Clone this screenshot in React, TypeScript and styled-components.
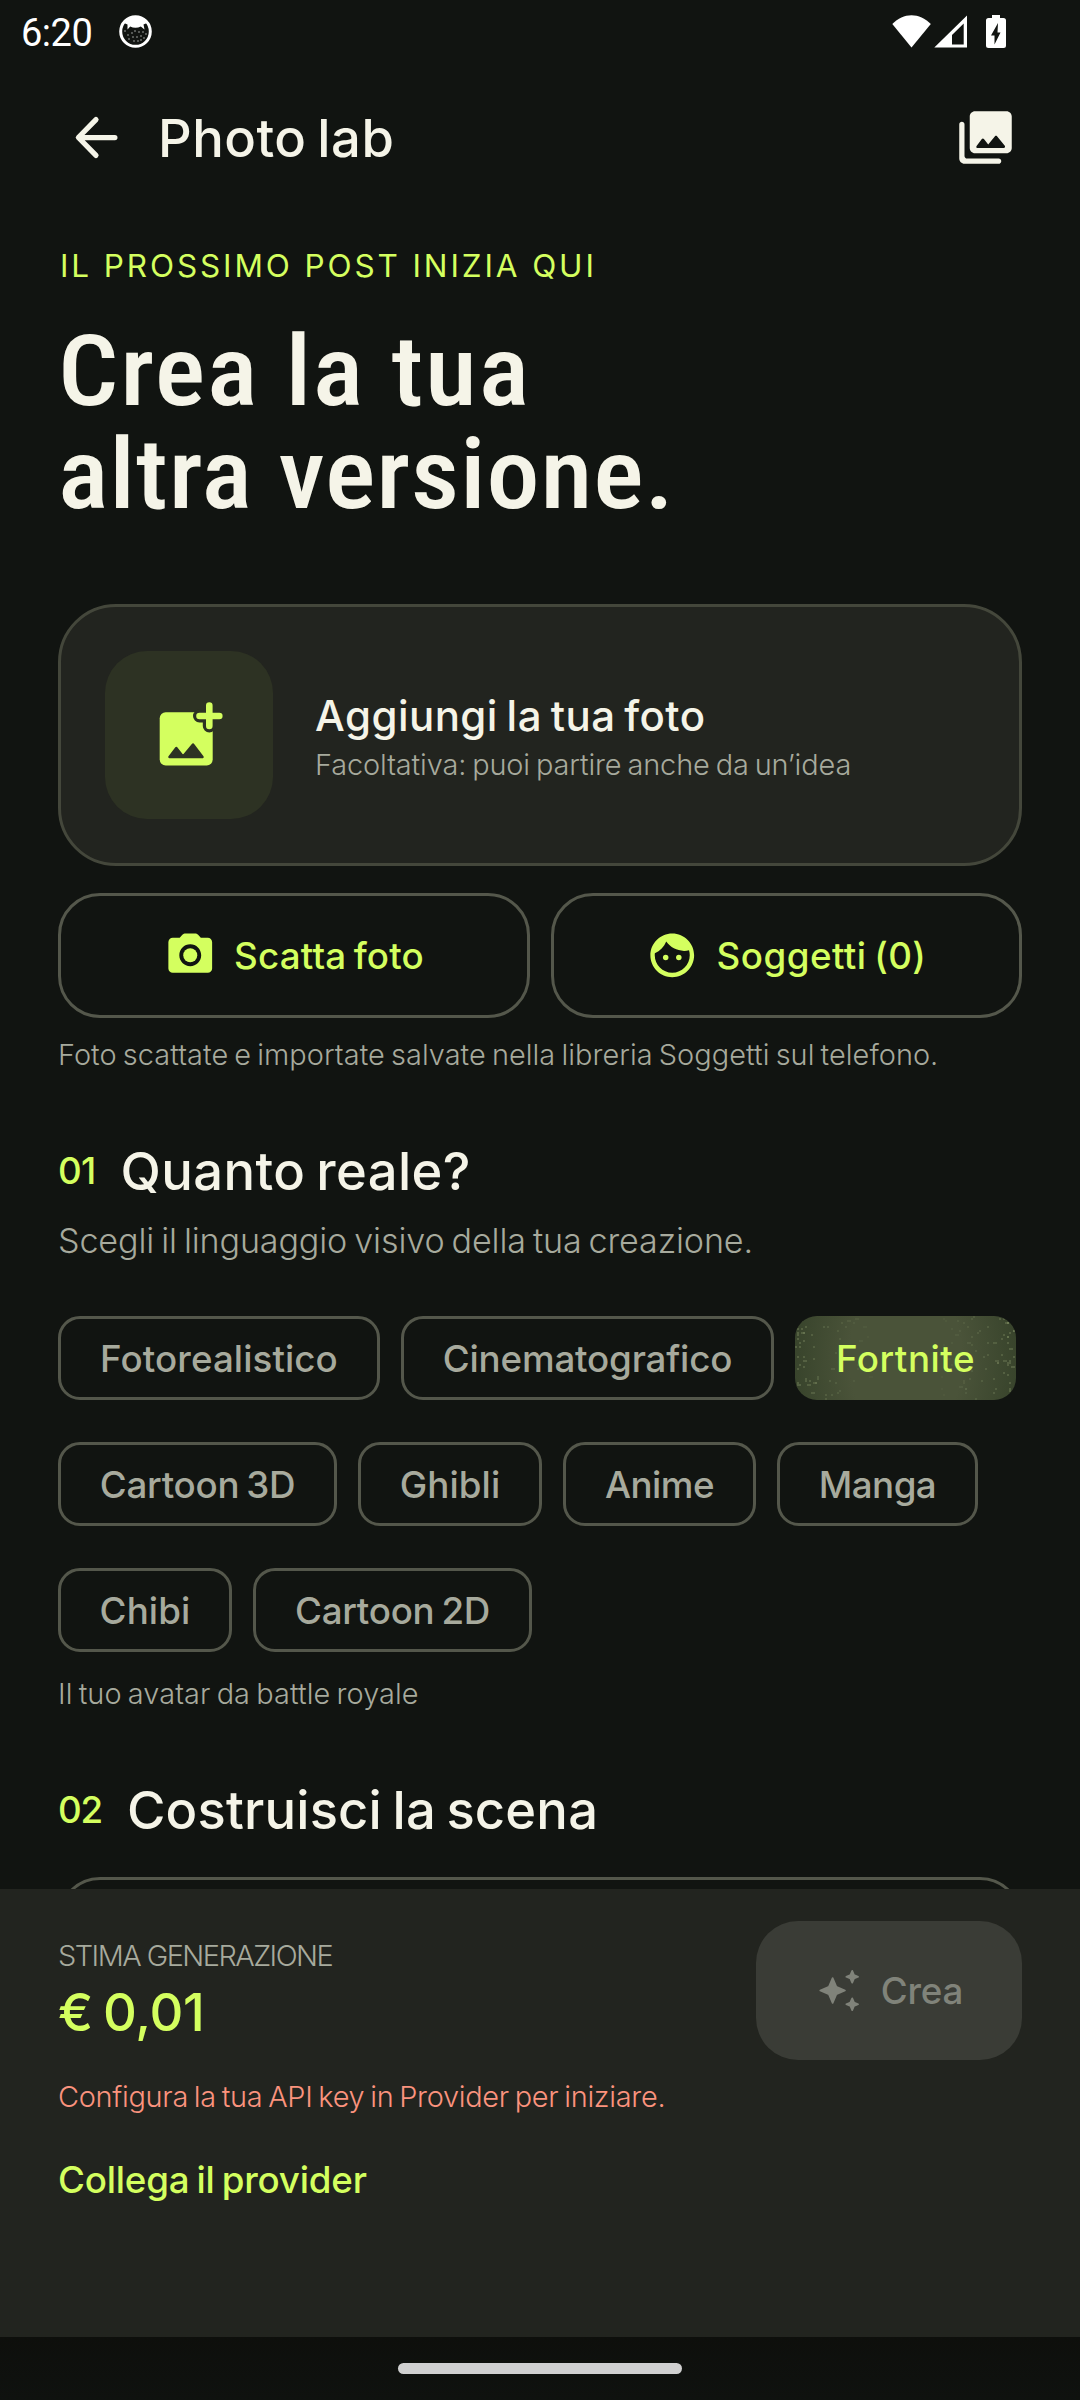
import React from 'react';
import styled, { createGlobalStyle } from 'styled-components';

const color = {
  bg: '#111411',
  panel: '#22241f',
  line: '#54574b',
  cardLine: '#44473b',
  cream: '#f5f4e8',
  lime: '#d4ff5f',
  muted: '#a7aa9d',
  disabled: '#80837a',
  error: '#fb937e',
};

const Global = createGlobalStyle`
  * { box-sizing: border-box; }
  body { margin: 0; background: ${color.bg}; }
`;

const Screen = styled.div`
  width: 1080px;
  height: 2400px;
  display: flex;
  flex-direction: column;
  overflow: hidden;
  background: ${color.bg};
  color: ${color.cream};
  font-family: Inter, "Liberation Sans", sans-serif;
  white-space: nowrap;
`;

const StatusBar = styled.header`
  flex: none;
  height: 64px;
  display: flex;
  align-items: center;
  justify-content: space-between;
  padding: 0 74px 1px 21px;
  color: #fff;
`;

const StatusGroup = styled.div`
  display: flex;
  align-items: center;
`;

const Clock = styled.span`
  width: 98px;
  padding-top: 2px;
  font: 400 38px/62px Roboto, sans-serif;
  letter-spacing: -0.5px;
`;

const AppBar = styled.div`
  flex: none;
  height: 147px;
  display: flex;
  align-items: center;
  padding: 0 63px 0 65px;
`;

const ScreenTitle = styled.h1`
  flex: 1;
  margin: 0 0 0 30px;
  font-size: 52.5px;
  line-height: 64px;
  font-weight: 550;
  letter-spacing: 0.5px;
  word-spacing: -0.07em;
`;

const Content = styled.main`
  flex: none;
  height: 1678px;
  overflow: hidden;
  display: flex;
  flex-direction: column;
  padding: 34px 58px 0;
`;

const Eyebrow = styled.div`
  padding-left: 2px;
  height: 41px;
  color: ${color.lime};
  font-size: 31.5px;
  line-height: 41px;
  letter-spacing: 2.88px;
`;

const Headline = styled.h2`
  margin: 35px 0 77px;
  font-family: "Roboto Condensed", Roboto, sans-serif;
  font-weight: 500;
  font-size: 97.5px;
  line-height: 103px;
`;

const HeadlineLine = styled.span<{ $ls: number }>`
  display: block;
  transform: scaleX(1.09);
  transform-origin: left;
  letter-spacing: ${(p) => p.$ls}px;
`;

const PhotoCard = styled.section`
  flex: none;
  height: 262px;
  display: flex;
  align-items: center;
  gap: 42px;
  padding: 0 44px;
  border: 3px solid ${color.cardLine};
  border-radius: 58px;
  background: ${color.panel};
`;

const PhotoTile = styled.div`
  width: 168px;
  height: 168px;
  display: flex;
  align-items: center;
  justify-content: center;
  border-radius: 42px;
  background: #2d3223;
`;

const PhotoText = styled.div`
  display: flex;
  flex-direction: column;
  padding-top: 4px;
`;

const PhotoTitle = styled.div`
  font-size: 42px;
  line-height: 56px;
  font-weight: 550;
  letter-spacing: 0.46px;
  word-spacing: -0.07em;
`;

const Note = styled.div<{ $ls: number; $color?: string; $h?: number }>`
  font-size: 28.9px;
  line-height: ${(p) => p.$h ?? 40}px;
  font-weight: 300;
  letter-spacing: ${(p) => p.$ls}px;
  word-spacing: -0.07em;
  color: ${(p) => p.$color ?? color.muted};
`;

const ButtonRow = styled.div`
  display: grid;
  grid-template-columns: 1fr 1fr;
  gap: 21px;
  margin: 27px 0 17px;
`;

const OutlineButton = styled.button<{ $ls: number }>`
  height: 125px;
  display: flex;
  align-items: center;
  justify-content: center;
  gap: 18px;
  padding: 0;
  border: 3px solid ${color.line};
  border-radius: 42px;
  background: none;
  color: ${color.lime};
  font: 550 36.75px/48px Inter, sans-serif;
  letter-spacing: ${(p) => p.$ls}px;
  word-spacing: -0.07em;
`;

const SectionHead = styled.div<{ $gap: number; $top: number }>`
  display: flex;
  align-items: center;
  gap: ${(p) => p.$gap}px;
  margin-top: ${(p) => p.$top}px;
  height: 60px;
`;

const SectionNumber = styled.span<{ $ls: number }>`
  color: ${color.lime};
  font-size: 36.75px;
  line-height: 60px;
  font-weight: 500;
  letter-spacing: ${(p) => p.$ls}px;
`;

const SectionTitle = styled.h3<{ $ls: number }>`
  margin: 0;
  font-size: 52.5px;
  line-height: 60px;
  font-weight: 550;
  letter-spacing: ${(p) => p.$ls}px;
  word-spacing: -0.07em;
`;

const SectionLead = styled.div`
  margin: 18px 0 53px;
  height: 44px;
  color: ${color.muted};
  font-size: 34.1px;
  line-height: 44px;
  font-weight: 300;
  letter-spacing: -0.12px;
  word-spacing: -0.07em;
`;

const Chips = styled.div`
  display: flex;
  flex-wrap: wrap;
  gap: 42px 21px;
  margin-bottom: 22px;
`;

const Chip = styled.div<{ $w: number; $ls: number; $selected?: boolean }>`
  position: relative;
  overflow: hidden;
  width: ${(p) => p.$w}px;
  height: 84px;
  display: flex;
  align-items: center;
  justify-content: center;
  border: ${(p) => (p.$selected ? 'none' : `3px solid ${color.line}`)};
  border-radius: 22px;
  background: ${(p) =>
    p.$selected ? 'radial-gradient(ellipse 125px 190px at center, #4a5339 45%, #36422a 95%)' : 'none'};
  color: ${(p) => (p.$selected ? color.lime : color.muted)};
  font-size: 36.75px;
  font-weight: 500;
  letter-spacing: ${(p) => p.$ls}px;
  word-spacing: -0.07em;
`;

const Sparkle = styled.svg`
  position: absolute;
  inset: 0;
`;

const ChipLabel = styled.span`
  position: relative;
`;

const SceneField = styled.div`
  flex: none;
  margin-top: 37px;
  height: 160px;
  border: 3px solid ${color.line};
  border-radius: 42px;
`;

const BottomPanel = styled.footer`
  flex: none;
  height: 448px;
  padding: 32px 58px 0;
  background: ${color.panel};
`;

const EstimateRow = styled.div`
  display: flex;
  justify-content: space-between;
  height: 139px;
`;

const Estimate = styled.div`
  display: flex;
  flex-direction: column;
  padding-top: 15px;
`;

const EstimateLabel = styled(Note)`
  word-spacing: 0;
`;

const Price = styled.div`
  margin-top: 5px;
  color: ${color.lime};
  font-size: 52.5px;
  line-height: 62px;
  font-weight: 550;
  letter-spacing: -0.3px;
  word-spacing: -0.07em;
`;

const CreateButton = styled.button`
  width: 266px;
  height: 139px;
  display: flex;
  align-items: center;
  justify-content: center;
  gap: 19px;
  padding: 0;
  border: 0;
  border-radius: 42px;
  background: #3a3c36;
  color: ${color.disabled};
  font: 500 36.75px/48px Inter, sans-serif;
  letter-spacing: -0.14px;
`;

const ErrorNote = styled(Note)`
  margin-top: 17px;
`;

const ProviderLink = styled.div`
  margin-top: 39px;
  color: ${color.lime};
  font-size: 36.75px;
  line-height: 48px;
  font-weight: 550;
  letter-spacing: -0.2px;
  word-spacing: -0.07em;
`;

const NavBar = styled.nav`
  flex: 1;
  display: flex;
  justify-content: center;
  align-items: flex-start;
  padding-top: 26px;
  background: linear-gradient(#0e0f0c, #0f120f);
`;

const NavPill = styled.div`
  width: 284px;
  height: 11px;
  border-radius: 6px;
  background: #d0d0d0;
`;

const NotificationIcon = () => (
  <svg width="33" height="33" viewBox="0 0 33 33">
    <circle cx="16.5" cy="16.5" r="14.8" fill="none" stroke="#fff" strokeWidth="3" />
    <path
      d="M5 8C8 4 12 2 16.500 2S25 4 28 8L24.500 9.500 25.500 14.500 21.800 11.600C18.500 13.200 14.500 13.200 11.200 11.600L8.500 14.500 8.500 9.500Z"
      fill="#fff"
    />
    <g fill="#fff" opacity=".65">
      {[[6, 16], [9, 20], [13, 18], [16, 16], [20, 17], [24, 17], [27, 19], [10, 24], [14, 22], [18, 22], [22, 21], [25, 23], [15, 26], [19, 26], [22, 25]].map(
        ([x, y]) => <circle key={`${x}-${y}`} cx={x} cy={y} r=".8" />,
      )}
    </g>
  </svg>
);

const SystemIcons = () => (
  <svg width="114" height="33" viewBox="892 14 114 33" fill="#fff">
    <path d="M892.300 23C898 17.500 904.500 14.300 911.500 14.300S925 17.500 930.800 23L911.500 46.500Z" />
    <path fillRule="evenodd" d="M934.300 46.500 967 14.500V46.500ZM952 34V43.500H963.700V22.500Z" />
    <path
      fillRule="evenodd"
      d="M992 17V14H1000V17H1003.500Q1006 17 1006 19.500V44.500Q1006 47 1003.500 47H988.500Q986 47 986 44.500V19.500Q986 17 988.500 17ZM998 22 991 34.500H994.500V43.500L1000.500 31.500H997.500Z"
    />
  </svg>
);

const BackIcon = () => (
  <svg width="63" height="63" viewBox="0 0 24 24" fill="none" stroke="currentColor" strokeWidth="2" strokeLinecap="round" strokeLinejoin="round">
    <path d="M19 12H5.200M11.800 5.200 5.100 12l6.700 6.800" />
  </svg>
);

const GalleryIcon = () => (
  <svg width="63" height="63" viewBox="0 0 24 24" fill="currentColor">
    <path d="M22 16V4c0-1.100-.9-2-2-2H8c-1.100 0-2 .9-2 2v12c0 1.100.9 2 2 2h12c1.100 0 2-.9 2-2zm-10.600-3.470l1.630 2.180 2.580-3.220c.2-.25.58-.25.78 0l2.960 3.700c.26.33.03.81-.39.81H9c-.41 0-.65-.47-.4-.8l2-2.670c.2-.26.6-.26.8 0zM2 7v13c0 1.100.9 2 2 2h13c.55 0 1-.45 1-1s-.45-1-1-1H5c-.55 0-1-.45-1-1V7c0-.55-.45-1-1-1s-1 .45-1 1z" />
  </svg>
);

const AddPhotoIcon = () => (
  <svg width="72" height="72" viewBox="153 699 72 72">
    <rect x="159.700" y="712.300" width="53" height="53.200" rx="6" fill={color.lime} />
    <path d="M199.500 716H209.300V726" fill="none" stroke="#2d3223" strokeWidth="13" strokeLinecap="round" />
    <path d="M209.300 705.500V726M199.500 716H219.300" fill="none" stroke={color.lime} strokeWidth="6.600" strokeLinecap="round" />
    <path
      d="M169.500 757 176.300 748 183 756.500 193 744.500 202.500 757Z"
      fill="#2d3223"
      stroke="#2d3223"
      strokeWidth="2.500"
      strokeLinejoin="round"
    />
  </svg>
);

const CameraIcon = () => (
  <svg width="52.5" height="52.5" viewBox="0 0 24 24" fill="currentColor">
    <circle cx="12" cy="12" r="3.200" />
    <path d="M20 4h-3.170l-1.240-1.350c-.37-.41-.91-.65-1.470-.65H9.880c-.56 0-1.100.24-1.480.65L7.170 4H4c-1.100 0-2 .9-2 2v12c0 1.100.9 2 2 2h16c1.100 0 2-.9 2-2V6c0-1.100-.9-2-2-2zm-8 13c-2.760 0-5-2.240-5-5s2.240-5 5-5 5 2.240 5 5-2.240 5-5 5z" />
  </svg>
);

const FaceIcon = () => (
  <svg width="52.5" height="52.5" viewBox="0 0 24 24" fill="currentColor">
    <circle cx="9" cy="13" r="1.250" />
    <circle cx="15" cy="13" r="1.250" />
    <path d="M12 2C6.480 2 2 6.480 2 12s4.480 10 10 10 10-4.480 10-10S17.520 2 12 2zm0 18c-4.410 0-8-3.590-8-8 0-.29.02-.58.05-.86 2.360-1.050 4.230-2.980 5.210-5.370C11.070 8.330 14.050 10 17.420 10c.78 0 1.530-.09 2.250-.26.21.71.33 1.470.33 2.260 0 4.410-3.590 8-8 8z" />
  </svg>
);

const SparklesIcon = () => (
  <svg width="47" height="47" viewBox="0 0 24 24" fill="currentColor" stroke="currentColor" strokeWidth=".9" strokeLinejoin="round">
    <path d="M9 5.700 10.900 10.100 15.300 12 10.900 13.900 9 18.300 7.100 13.900 2.700 12 7.100 10.100Z" />
    <path d="M19 2 19.900 4.100 22 5 19.900 5.900 19 8 18.100 5.900 16 5 18.100 4.100ZM19 16 19.900 18.100 22 19 19.900 19.900 19 22 18.100 19.900 16 19 18.100 18.100Z" />
  </svg>
);

// Seeded generator keeps the grain identical between renders.
const seeded = (seed: number) => () => {
  seed = (Math.imul(seed ^ (seed >>> 15), 0x2c1b3c6d) + 0x6d2b79f5) | 0;
  const t = Math.imul(seed ^ (seed >>> 13), 0x297a2d39);
  return ((t ^ (t >>> 16)) >>> 0) / 4294967296;
};

const random = seeded(20);

// Grain is denser toward both ends of the selected chip.
const specks = Array.from({ length: 140 }, () => {
  const t = random() ** 1.2 * 75;
  const left = random() < 0.5;
  return {
    x: 2 * Math.round((left ? t : 219 - t) / 2),
    y: 2 * Math.round(random() * 41),
    w: random() < 0.2 ? 4 : 2,
    o: 0.42 - t / 220,
  };
});

const Grain = () => (
  <Sparkle width="221" height="84" viewBox="0 0 221 84" fill="#7d8b62">
    {specks.map((s, i) => (
      <rect key={i} x={s.x} y={s.y} width={s.w} height="2" opacity={s.o} />
    ))}
  </Sparkle>
);

const styles = [
  { label: 'Fotorealistico', w: 322, ls: 0.08 },
  { label: 'Cinematografico', w: 373, ls: -0.18 },
  { label: 'Fortnite', w: 221, ls: 0.5, selected: true },
  { label: 'Cartoon 3D', w: 279, ls: -0.26 },
  { label: 'Ghibli', w: 184, ls: 0.1 },
  { label: 'Anime', w: 193, ls: -0.52 },
  { label: 'Manga', w: 201, ls: -0.57 },
  { label: 'Chibi', w: 174, ls: 0.1 },
  { label: 'Cartoon 2D', w: 279, ls: -0.26 },
];

export default function App() {
  return (
    <Screen>
      <Global />
      <StatusBar>
        <StatusGroup>
          <Clock>6:20</Clock>
          <NotificationIcon />
        </StatusGroup>
        <SystemIcons />
      </StatusBar>
      <AppBar>
        <BackIcon />
        <ScreenTitle>Photo lab</ScreenTitle>
        <GalleryIcon />
      </AppBar>
      <Content>
        <Eyebrow>IL PROSSIMO POST INIZIA QUI</Eyebrow>
        <Headline>
          <HeadlineLine $ls={1.6}>Crea la tua</HeadlineLine>
          <HeadlineLine $ls={0.75}>altra versione.</HeadlineLine>
        </Headline>
        <PhotoCard>
          <PhotoTile>
            <AddPhotoIcon />
          </PhotoTile>
          <PhotoText>
            <PhotoTitle>Aggiungi la tua foto</PhotoTitle>
            <Note $ls={-0.12} $h={42}>Facoltativa: puoi partire anche da un’idea</Note>
          </PhotoText>
        </PhotoCard>
        <ButtonRow>
          <OutlineButton $ls={0.17}>
            <CameraIcon />
            Scatta foto
          </OutlineButton>
          <OutlineButton $ls={0.45}>
            <FaceIcon />
            Soggetti (0)
          </OutlineButton>
        </ButtonRow>
        <Note $ls={0.05}>Foto scattate e importate salvate nella libreria Soggetti sul telefono.</Note>
        <SectionHead $gap={25} $top={66}>
          <SectionNumber $ls={-0.72}>01</SectionNumber>
          <SectionTitle $ls={0.42}>Quanto reale?</SectionTitle>
        </SectionHead>
        <SectionLead>Scegli il linguaggio visivo della tua creazione.</SectionLead>
        <Chips>
          {styles.map((s) => (
            <Chip key={s.label} $w={s.w} $ls={s.ls} $selected={s.selected}>
              {s.selected && <Grain />}
              <ChipLabel>{s.label}</ChipLabel>
            </Chip>
          ))}
        </Chips>
        <Note $ls={0.08}>Il tuo avatar da battle royale</Note>
        <SectionHead $gap={25} $top={66}>
          <SectionNumber $ls={-1.22}>02</SectionNumber>
          <SectionTitle $ls={0.18}>Costruisci la scena</SectionTitle>
        </SectionHead>
        <SceneField />
      </Content>
      <BottomPanel>
        <EstimateRow>
          <Estimate>
            <EstimateLabel $ls={-1.52}>STIMA GENERAZIONE</EstimateLabel>
            <Price>€ 0,01</Price>
          </Estimate>
          <CreateButton>
            <SparklesIcon />
            Crea
          </CreateButton>
        </EstimateRow>
        <ErrorNote $ls={-0.28} $color={color.error}>Configura la tua API key in Provider per iniziare.</ErrorNote>
        <ProviderLink>Collega il provider</ProviderLink>
      </BottomPanel>
      <NavBar>
        <NavPill />
      </NavBar>
    </Screen>
  );
}
